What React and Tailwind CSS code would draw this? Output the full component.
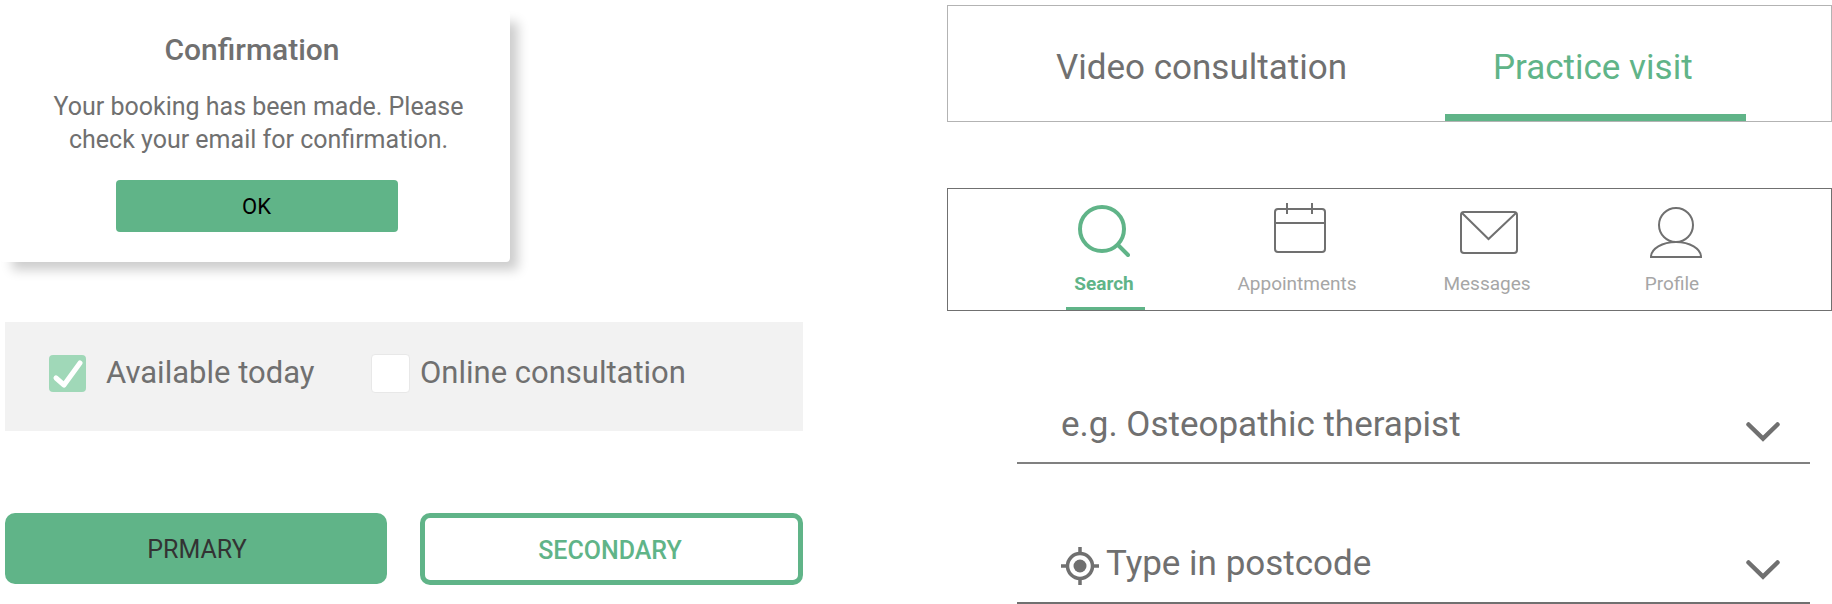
import React from "react";

const G = "#60b488";
const INK = "#707070";

function Search() {
  return (
    <svg width="52" height="52" viewBox="0 0 52 52" fill="none" stroke={G} strokeWidth="4" strokeLinecap="round">
      <circle cx="24" cy="24" r="22" />
      <path d="M40 40 L50 50" />
    </svg>
  );
}
function Calendar() {
  return (
    <svg width="52" height="50" viewBox="0 0 52 50" fill="none" stroke={INK} strokeWidth="2">
      <rect x="1" y="6" width="50" height="43" rx="3" />
      <path d="M1 20 H51 M13 0 V11 M38 0 V11" />
    </svg>
  );
}
function Mail() {
  return (
    <svg width="58" height="43" viewBox="0 0 58 43" fill="none" stroke={INK} strokeWidth="2">
      <rect x="1" y="1" width="56" height="41" rx="3" />
      <path d="M2 2 L28.500 28 L56 2" />
    </svg>
  );
}
function Person() {
  return (
    <svg width="52" height="51" viewBox="0 0 52 51" fill="none" stroke={INK} strokeWidth="2">
      <circle cx="26" cy="18" r="17" />
      <path d="M1 50 A25 15 0 0 1 51 50 Z" />
    </svg>
  );
}
function Chevron() {
  return (
    <svg width="34" height="20" viewBox="0 0 34 20" fill="none" stroke={INK} strokeWidth="4.500" strokeLinecap="round" strokeLinejoin="miter">
      <path d="M2.500 2.500 L17 16.500 L31.500 2.500" />
    </svg>
  );
}
function Target() {
  return (
    <svg width="38" height="38" viewBox="0 0 38 38" fill="none" stroke={INK} strokeWidth="3.500">
      <circle cx="19" cy="19" r="12.500" />
      <circle cx="19" cy="19" r="6.500" fill={INK} stroke="none" />
      <path d="M19 0 V6 M19 32 V38 M0 19 H6 M32 19 H38" />
    </svg>
  );
}
function NavItem({ icon, label, active, w, iconClass }) {
  return (
    <div className="flex flex-col items-center" style={{ width: w }}>
      <div className={`h-[56px] ${iconClass}`}>{icon}</div>
      <div className={`mt-[13px] text-[19px] leading-[24px] whitespace-nowrap ${active ? "text-[#60b488] font-bold" : "text-[#a6a6a6]"}`}>{label}</div>
    </div>
  );
}

export default function App() {
  return (
    <div className="w-[1832px] h-[604px] overflow-hidden bg-white flex font-['Roboto',sans-serif] text-[#707070]">
      <div className="w-[947px] shrink-0 pl-[5px] flex flex-col">
        <div className="-ml-[5px] w-[510px] h-[252px] mt-[10px] bg-white rounded-[4px] shadow-[10px_10px_12px_-2px_rgba(0,0,0,0.2)] flex flex-col items-center">
          <div className="mt-[22px] mr-[6px] text-[30px] leading-[36px] font-medium">Confirmation</div>
          <div className="mt-[22px] ml-[7px] text-[25px] leading-[33px] text-center whitespace-nowrap">Your booking has been made. Please<br />check your email for confirmation.</div>
          <div className="mt-[24px] w-[282px] h-[52px] ml-[3px] rounded-[4px] bg-[#60b488] text-black text-[22px] flex items-center justify-center">OK</div>
        </div>
        <div className="mt-[60px] w-[798px] h-[109px] bg-[#f2f2f2] flex items-center pl-[44px] pb-[7px]">
          <div className="w-[37px] h-[37px] rounded-[4px] bg-[#a0d8b8] flex items-center justify-center">
            <svg width="37" height="37" viewBox="0 0 37 37" fill="none" stroke="#fff" strokeWidth="5" strokeLinecap="round" strokeLinejoin="round"><path d="M7 23 L15 30 L31 8" /></svg>
          </div>
          <div className="ml-[20px] text-[31px] w-[208px] whitespace-nowrap">Available today</div>
          <div className="ml-[57px] w-[39px] h-[39px] rounded-[4px] bg-white border border-[#e8e8e8]" />
          <div className="ml-[10px] text-[31px] whitespace-nowrap">Online consultation</div>
        </div>
        <div className="mt-[82px] flex w-[798px] justify-between">
          <div className="w-[382px] h-[71px] rounded-[10px] bg-[#60b488] text-[#333] text-[25px] pt-[3px] pl-[2px] flex items-center justify-center">PRMARY</div>
          <div className="w-[383px] h-[72px] rounded-[10px] bg-white border-[5px] border-[#60b488] text-[#60b488] font-medium text-[25px] pt-[4px] pr-[3px] flex items-center justify-center">SECONDARY</div>
        </div>
      </div>
      <div className="flex-1 flex flex-col">
        <div className="mt-[5px] h-[117px] border border-[#b3b3b3] flex items-center pl-[108px] pt-[10px] text-[35px] relative">
          <div>Video consultation</div>
          <div className="ml-[146px] text-[#60b488]">Practice visit</div>
          <div className="absolute bottom-0 left-[497px] w-[301px] h-[7px] bg-[#60b488]" />
        </div>
        <div className="mt-[66px] h-[123px] border border-[#707070] flex pl-[96px] pt-[14px] relative">
          <NavItem active w={120} iconClass="mt-[2px] -mb-[2px]" icon={<Search />} label="Search" />
          <NavItem w={266} iconClass="ml-[6px]" icon={<Calendar />} label="Appointments" />
          <NavItem w={114} iconClass="mt-[8px] -mb-[8px] ml-[4px]" icon={<Mail />} label="Messages" />
          <NavItem w={256} iconClass="mt-[4px] -mb-[4px] ml-[8px]" icon={<Person />} label="Profile" />
          <div className="absolute bottom-0 left-[118px] w-[79px] h-[3px] bg-[#60b488]" />
        </div>
        <div className="ml-[70px] w-[793px] mt-[60px] h-[93px] border-b-2 border-[#808080] flex items-start justify-between pt-[34px] pl-[44px] pr-[30px]">
          <div className="text-[35px] leading-[40px]">e.g. Osteopathic therapist</div>
          <div className="mt-[17px]"><Chevron /></div>
        </div>
        <div className="ml-[70px] w-[793px] mt-[30px] h-[110px] border-b-2 border-[#707070] flex items-start pt-[50px] pl-[44px] pr-[30px]">
          <div className="mt-[3px]"><Target /></div>
          <div className="text-[35px] leading-[40px] ml-[7px] flex-1">Type in postcode</div>
          <div className="mt-[16px]"><Chevron /></div>
        </div>
      </div>
    </div>
  );
}
